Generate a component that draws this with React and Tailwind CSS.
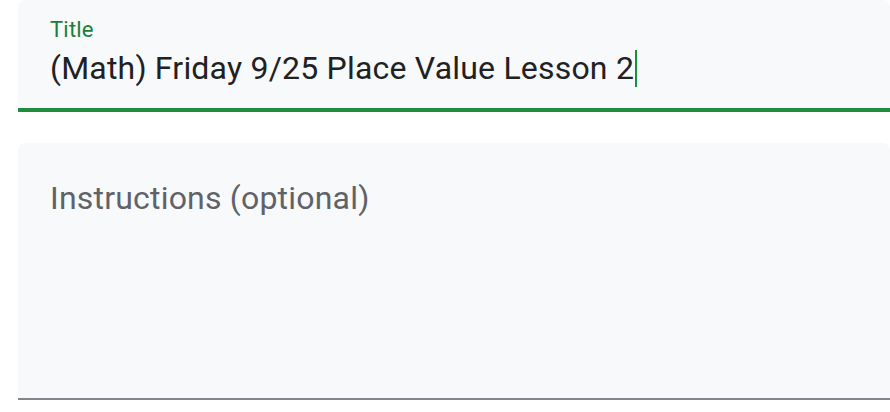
import React from "react";

export default function App() {
  return (
    <div className="w-[890px] h-[412px] bg-white overflow-hidden" style={{ fontFamily: "Roboto, 'Noto Sans', sans-serif" }}>
      <div className="flex flex-col pl-[18px] gap-[31px]">
        <div className="h-[112px] rounded-t-[7px] bg-[#f8f9fa] border-b-[4px] border-[#1e8e3e] pl-[32px] pt-[18px] flex flex-col">
          <div className="text-[22px] leading-[24px] tracking-[0.2px] text-[#188038]">Title</div>
          <div className="flex items-center mt-[8px]">
            <span className="text-[32px] leading-[37px] tracking-[0.2px] text-[#202124]">(Math) Friday 9/25 Place Value Lesson 2</span>
            <span className="w-[2px] h-[37px] bg-[#1e8e3e] ml-[1px]"></span>
          </div>
        </div>
        <div className="h-[257px] rounded-t-[7px] bg-[#f8f9fa] border-b-[2px] border-[#80868b] pl-[32px] pt-[37px]">
          <div className="text-[32px] leading-[37px] tracking-[0.2px] text-[#5f6368]">Instructions (optional)</div>
        </div>
      </div>
    </div>
  );
}
